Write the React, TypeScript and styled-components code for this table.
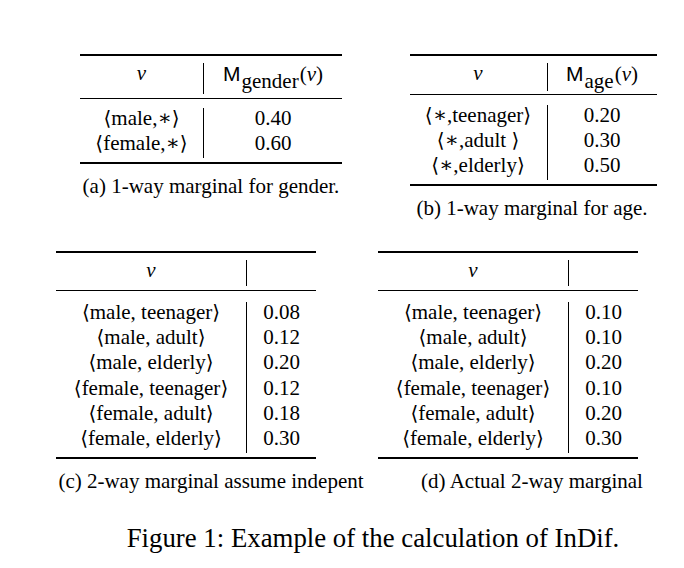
import React from 'react';
import styled, { createGlobalStyle } from 'styled-components';

const Global = createGlobalStyle`
  html, body { margin: 0; padding: 0; background: #ffffff; }
  body { width: 684px; height: 568px; overflow: hidden; }
`;

const serif = `"Liberation Serif", "Times New Roman", "DejaVu Serif", serif`;

const Page = styled.div`
  width: 684px;
  height: 568px;
  overflow: hidden;
  box-sizing: border-box;
  padding-top: 54px;
  font-family: ${serif};
  font-size: 21px;
  color: #000;
`;

const Figure = styled.div`
  width: 641px;
  margin-left: 51px;
  display: flex;
  flex-direction: column;
  align-items: center;
`;

const Grid = styled.div`
  display: grid;
  grid-template-columns: 320px 320px;
  column-gap: 1px;
  row-gap: 30px;
  align-items: start;
`;

const SubFigure = styled.div`
  display: flex;
  flex-direction: column;
  align-items: center;
`;

const Table = styled.div<{ $w: number; $shift: number }>`
  width: ${(p) => p.$w}px;
  margin-right: ${(p) => p.$shift * 2}px;
  display: flex;
  flex-direction: column;
`;

const Rule = styled.div<{ $t: number }>`
  height: ${(p) => p.$t}px;
  background: #000;
`;

const Section = styled.div<{ $left: number; $pt: number; $pb: number }>`
  display: grid;
  grid-template-columns: ${(p) => p.$left}px 1fr;
  padding: ${(p) => p.$pt}px 0 ${(p) => p.$pb}px;
`;

const Col = styled.div<{ $divider?: boolean }>`
  display: flex;
  flex-direction: column;
  border-right: ${(p) => (p.$divider ? '1px solid #000' : 'none')};
`;

const Row = styled.div<{ $h: number }>`
  height: ${(p) => p.$h}px;
  line-height: 21px;
  font-family: ${serif};
  font-size: 21px;
  text-align: center;
  white-space: nowrap;
`;

const Bracket = styled.span`
  font-family: "DejaVu Serif", "DejaVu Sans", serif;
  font-weight: 300;
  font-size: 20px;
`;

const Var = styled.i`
  font-family: ${serif};
  font-style: italic;
`;

const SansM = styled.span`
  font-family: "Liberation Sans", Arial, sans-serif;
  font-size: 21px;
  margin-right: 1px;
`;

const Subscript = styled.span`
  font-family: ${serif};
  font-size: 21px;
  vertical-align: -7px;
  margin-right: 1px;
`;

const Caption = styled.div`
  margin-top: 10px;
  line-height: 25px;
  font-family: ${serif};
  font-size: 21px;
  white-space: nowrap;
`;

const FigCaption = styled.div`
  margin-top: 29px;
  padding-left: 3px;
  font-family: ${serif};
  font-size: 26.8px;
  line-height: 30px;
  white-space: nowrap;
`;

type Cfg = {
  w: number;
  left: number;
  shift: number;
  head: { pt: number; h: number; pb: number };
  body: { pt: number; h: number; pb: number };
  label: React.ReactNode;
  rows: [string, string][];
  caption: string;
};

const AST = '\u2217';

const Tuple = ({ text }: { text: string }) => (
  <>
    <Bracket>{'\u27E8'}</Bracket>
    {text}
    <Bracket>{'\u27E9'}</Bracket>
  </>
);

function SubTable({ c }: { c: Cfg }) {
  return (
    <SubFigure>
      <Table $w={c.w} $shift={c.shift}>
        <Rule $t={2} />
        <Section $left={c.left} $pt={c.head.pt} $pb={c.head.pb}>
          <Col $divider>
            <Row $h={c.head.h}>
              <Var>v</Var>
            </Row>
          </Col>
          <Col>
            <Row $h={c.head.h}>{c.label}</Row>
          </Col>
        </Section>
        <Rule $t={1} />
        <Section $left={c.left} $pt={c.body.pt} $pb={c.body.pb}>
          <Col $divider>
            {c.rows.map(([k]) => (
              <Row key={k} $h={c.body.h}>
                <Tuple text={k} />
              </Row>
            ))}
          </Col>
          <Col>
            {c.rows.map(([k, v]) => (
              <Row key={k} $h={c.body.h}>
                {v}
              </Row>
            ))}
          </Col>
        </Section>
        <Rule $t={2} />
      </Table>
      <Caption>{c.caption}</Caption>
    </SubFigure>
  );
}

const tables: Cfg[] = [
  {
    w: 262,
    left: 124,
    shift: 0,
    head: { pt: 7, h: 31, pb: 4 },
    body: { pt: 9, h: 25, pb: 4 },
    label: (
      <>
        <SansM>M</SansM>
        <Subscript>gender</Subscript>(<Var>v</Var>)
      </>
    ),
    rows: [
      [`male,${AST}`, '0.40'],
      [`female,${AST}`, '0.60'],
    ],
    caption: '(a) 1-way marginal for gender.',
  },
  {
    w: 247,
    left: 138,
    shift: -1,
    head: { pt: 7, h: 28, pb: 3 },
    body: { pt: 10, h: 25, pb: 4 },
    label: (
      <>
        <SansM>M</SansM>
        <Subscript>age</Subscript>(<Var>v</Var>)
      </>
    ),
    rows: [
      [`${AST},teenager`, '0.20'],
      [`${AST},adult `, '0.30'],
      [`${AST},elderly`, '0.50'],
    ],
    caption: '(b) 1-way marginal for age.',
  },
  {
    w: 260,
    left: 191,
    shift: 25,
    head: { pt: 7, h: 26, pb: 4 },
    body: { pt: 11, h: 25.2, pb: 4 },
    label: null,
    rows: [
      ['male, teenager', '0.08'],
      ['male, adult', '0.12'],
      ['male, elderly', '0.20'],
      ['female, teenager', '0.12'],
      ['female, adult', '0.18'],
      ['female, elderly', '0.30'],
    ],
    caption: '(c) 2-way marginal assume indepent',
  },
  {
    w: 260,
    left: 191,
    shift: 24,
    head: { pt: 7, h: 26, pb: 4 },
    body: { pt: 11, h: 25.2, pb: 4 },
    label: null,
    rows: [
      ['male, teenager', '0.10'],
      ['male, adult', '0.10'],
      ['male, elderly', '0.20'],
      ['female, teenager', '0.10'],
      ['female, adult', '0.20'],
      ['female, elderly', '0.30'],
    ],
    caption: '(d) Actual 2-way marginal',
  },
];

export default function App() {
  return (
    <>
      <Global />
      <Page>
        <Figure>
          <Grid>
            {tables.map((t) => (
              <SubTable key={t.caption} c={t} />
            ))}
          </Grid>
          <FigCaption>Figure 1: Example of the calculation of InDif.</FigCaption>
        </Figure>
      </Page>
    </>
  );
}
